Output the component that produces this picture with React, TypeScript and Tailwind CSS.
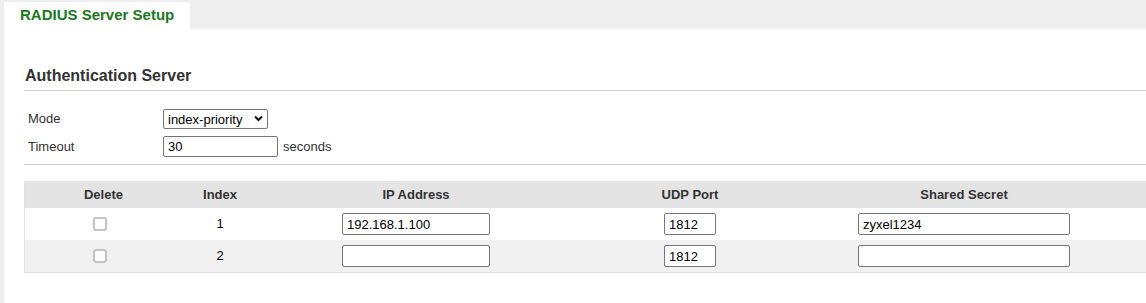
import React from "react";

const font = { fontFamily: '"Liberation Sans", Arial, sans-serif' };

function Check() {
  return (
    <input
      type="checkbox"
      className="appearance-none w-[14px] h-[14px] border-2 border-[#c4c4c4] rounded-[3px] bg-white m-0"
    />
  );
}

function TextBox({ value, w }: { value: string; w: string }) {
  return (
    <input
      type="text"
      defaultValue={value}
      className={`${w} h-[22px] border border-[#767676] rounded-[2px] bg-white px-[4px] text-[13px] text-black outline-none`}
    />
  );
}

export default function App() {
  const rows = [
    { idx: "1", ip: "192.168.1.100", port: "1812", secret: "zyxel1234", bg: "bg-white" },
    { idx: "2", ip: "", port: "1812", secret: "", bg: "bg-[#f1f1f1]" },
  ];
  return (
    <div
      className="w-[1146px] h-[303px] bg-[#eeeeee] pl-[4px] flex flex-col overflow-hidden"
      style={font}
    >
      <div className="h-[29px] pt-[2px] flex">
        <div className="w-[186px] h-[27px] bg-white pl-[16px] flex items-center text-[15px] font-bold text-[#18791d]">
          RADIUS Server Setup
        </div>
      </div>
      <div className="flex-1 bg-white pl-[20px] pt-[37px]">
        <div className="border-b border-[#cccccc] pb-[4px] pl-[1px] text-[16px] leading-[20px] font-bold text-[#333333]">
          Authentication Server
        </div>
        <div className="pt-[18px] flex flex-col gap-[7px] pb-[7px] border-b border-[#cccccc]">
          <div className="flex items-center h-[20px] text-[13px] text-[#333333]">
            <div className="w-[139px] pl-[4px]">Mode</div>
            <div className="relative">
              <select className="appearance-none w-[105px] h-[20px] border border-[#767676] rounded-[2px] bg-white pl-[4px] text-[13px] text-black outline-none">
                <option>index-priority</option>
              </select>
              <svg
                className="absolute right-[5px] top-[6px] pointer-events-none"
                width="9"
                height="7"
                viewBox="0 0 9 7"
              >
                <path d="M1 1.5 L4.5 5 L8 1.5" fill="none" stroke="#111" strokeWidth="2" />
              </svg>
            </div>
          </div>
          <div className="flex items-center h-[21px] text-[13px] text-[#333333]">
            <div className="w-[139px] pl-[4px]">Timeout</div>
            <input
              type="text"
              defaultValue="30"
              className="w-[115px] h-[21px] border border-[#767676] rounded-[2px] bg-white px-[4px] text-[13px] text-black outline-none"
            />
            <span className="ml-[5px]">seconds</span>
          </div>
        </div>
        <div className="mt-[16px] border-l border-b border-[#e2e2e2] text-[13px] text-[#333333]">
          <div className="flex h-[27px] items-center bg-[#e4e4e4] font-bold">
            <div className="w-[157px] text-center">Delete</div>
            <div className="w-[76px] text-center">Index</div>
            <div className="w-[316px] text-center">IP Address</div>
            <div className="w-[232px] text-center">UDP Port</div>
            <div className="w-[316px] text-center">Shared Secret</div>
            <div className="flex-1" />
          </div>
          {rows.map((r) => (
            <div key={r.idx} className={`flex h-[32px] items-center ${r.bg}`}>
              <div className="w-[157px] flex justify-center pr-[7px]">
                <Check />
              </div>
              <div className="w-[76px] text-center text-black">{r.idx}</div>
              <div className="w-[316px] flex justify-center">
                <TextBox value={r.ip} w="w-[148px]" />
              </div>
              <div className="w-[232px] flex justify-center">
                <TextBox value={r.port} w="w-[52px]" />
              </div>
              <div className="w-[316px] flex justify-center">
                <TextBox value={r.secret} w="w-[212px]" />
              </div>
              <div className="flex-1" />
            </div>
          ))}
        </div>
      </div>
    </div>
  );
}
